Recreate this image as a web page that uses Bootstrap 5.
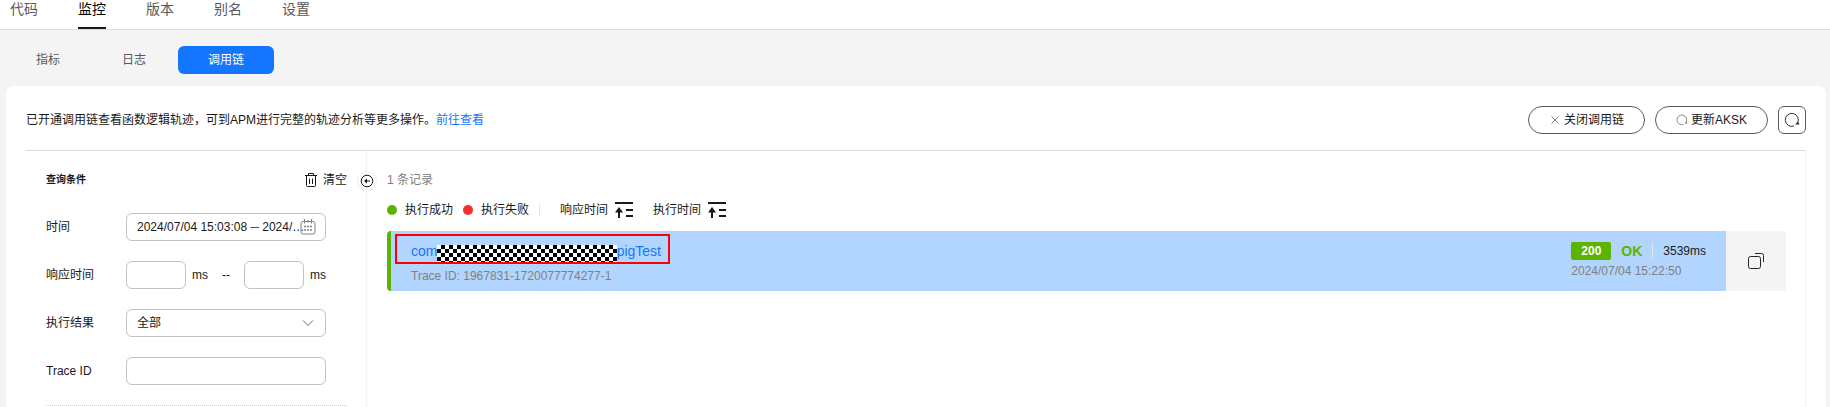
<!DOCTYPE html>
<html lang="zh-CN">
<head>
<meta charset="utf-8">
<meta name="viewport" content="width=device-width, initial-scale=1">
<title>函数监控 - 调用链</title>
<link href="https://cdn.jsdelivr.net/npm/bootstrap@5.3.0/dist/css/bootstrap.min.css" rel="stylesheet">
<style>
  body { background: #f4f4f4; color: #191919; font: 12px/18px "Liberation Sans", "Noto Sans CJK SC", sans-serif; overflow-x: hidden; }
  svg { display: block; flex: none; }
  .main-tabs { height: 30px; padding-left: 10px; gap: 40px; border-bottom: 1px solid #dbdbdb; }
  .main-tabs a { color: #595959; font-size: 14px; line-height: 18px; height: 29px; text-decoration: none; }
  .main-tabs a.active { color: #000; border-bottom: 2px solid #191919; }
  .sub-tabs { padding: 16px 6px 12px; gap: 2px; }
  .sub-tabs .btn { font-size: 12px; line-height: 18px; padding: 5px 30px; color: #595959; border-radius: 6px; }
  .sub-tabs .btn.active { background: #1476ff; color: #fff; }
  .panel { background: #fff; border-radius: 8px 8px 0 0; margin: 0 4px 0 6px; padding: 20px 20px 0; min-height: calc(100vh - 86px); }
  .panel-head { padding-bottom: 16px; border-bottom: 1px solid #dcdce3; }
  .head-actions { gap: 10px; }
  .blue-link { color: #1476ff; text-decoration: none; }
  .tool-btn { height: 28px; border: 1px solid #595959; font-size: 12px; line-height: 18px; padding: 0 20px; gap: 3px; background: #fff; color: #191919; border-radius: 14px; }
  .tool-btn.square { width: 28px; padding: 0; border-radius: 6px; }
  .filters { width: 341px; flex: none; border-right: 1px solid #f2f2f2; padding: 19px 19px 0 20px; }
  .filters-head { margin-bottom: 23px; }
  .filters h2 { font-size: 10px; line-height: 20px; font-weight: 700; margin: 0; }
  .clear-btn { border: 0; background: none; padding: 0; gap: 6px; color: #191919; }
  .filter-row { height: 28px; margin-bottom: 20px; }
  .filter-row > label { width: 80px; flex: none; }
  .field { height: 28px; border: 1px solid #c2c2c2; border-radius: 6px; font-size: 12px; line-height: 18px; padding: 0 10px; color: #191919; background-color: #fff; }
  .field-wide { width: 200px; }
  .field-small { width: 60px; }
  select.field { appearance: none; }
  .field-icon { position: absolute; right: 10px; top: 6px; pointer-events: none; }
  .date-text { padding-right: 16px; text-overflow: ellipsis; }
  .unit { margin-left: 6px; }
  .dash { margin: 0 14px; }
  .collapse-btn { position: absolute; left: 331px; top: 20px; width: 20px; height: 20px; padding: 0; border: 1px solid #f0f0f0; border-radius: 50%; background: #fff; }
  .results { padding: 19px 19px 0 20px; border-right: 1px solid #f2f2f2; min-width: 0; }
  .muted { color: #808080; }
  .count { line-height: 20px; }
  .legend-bar { height: 20px; margin: 10px 0 11px; gap: 10px; }
  .legend-bar > span { display: flex; align-items: center; gap: 8px; }
  .dot { width: 10px; height: 10px; border-radius: 50%; flex: none; }
  .bg-ok { background: #5cb300; }
  .bg-fail { background: #f23030; }
  .rule { width: 1px; height: 14px; background: #e6e6e6; }
  .sort-btn { border: 0; background: none; padding: 0; margin-right: 10px; gap: 7px; color: #191919; }
  .rule + .sort-btn { margin-left: 10px; }
  .trace { height: 60px; }
  .trace-body { background: #b2d5ff; border-left: 4px solid #5cb300; border-radius: 4px 0 0 4px; padding: 0 20px 0 4px; }
  .fn-name { border: 2px solid #f00; height: 30px; width: 275px; padding: 0 7px 0 14px; font-size: 14px; line-height: 22px; margin-top: 3px; }
  .redacted { height: 17px; background: repeating-conic-gradient(#000 0 25%, #fff 0 50%) 0 0 / 8px 8px; }
  .trace-id { padding-left: 16px; margin-top: 3px; }
  .trace-status { padding-top: 11px; }
  .code-tag { width: 40px; height: 18px; border-radius: 2px; color: #fff; font-weight: 700; text-align: center; }
  .ok-text { color: #5cb300; font-size: 14px; font-weight: 700; margin: 0 10px; }
  .duration { margin-left: 10px; }
  .stamp { margin-top: 2px; }
  .copy-btn { width: 60px; flex: none; border: 0; background: #f4f4f4; padding: 0; }
  .dotted { border-top: 1px dotted #d0d0d0; }
</style>
</head>
<body>
<nav class="main-tabs d-flex bg-white">
  <a href="#">代码</a><a href="#" class="active" aria-current="page">监控</a><a href="#">版本</a><a href="#">别名</a><a href="#">设置</a>
</nav>
<div class="sub-tabs d-flex">
  <button type="button" class="btn border-0">指标</button>
  <button type="button" class="btn border-0">日志</button>
  <button type="button" class="btn border-0 active">调用链</button>
</div>
<main class="panel d-flex flex-column">
  <div class="panel-head d-flex align-items-center">
    <div class="me-auto">已开通调用链查看函数逻辑轨迹，可到APM进行完整的轨迹分析等更多操作。<a class="blue-link" href="#">前往查看</a></div>
    <div class="head-actions d-flex">
      <button type="button" class="tool-btn d-flex align-items-center justify-content-center">
        <svg width="12" height="12" viewBox="0 0 12 12" stroke="#808080"><path d="M2.500 2.500l7 7M9.500 2.500l-7 7"/></svg>关闭调用链</button>
      <button type="button" class="tool-btn d-flex align-items-center justify-content-center">
        <svg width="12" height="12" viewBox="0 0 16 16" fill="none" stroke="#808080" stroke-width="1.200"><path d="M10 14A6.500 6.500 0 1 1 13.500 11"/><path d="M11 12.500h4.500l-1.500-3z" fill="#808080" stroke="none"/></svg>更新AKSK</button>
      <button type="button" class="tool-btn square d-flex align-items-center justify-content-center" aria-label="刷新">
        <svg width="16" height="16" viewBox="0 0 16 16" fill="none" stroke="#333"><path d="M10 14A6.500 6.500 0 1 1 13.500 11"/><path d="M11 12.500h4.500l-1.500-3z" fill="#333" stroke="none"/></svg></button>
    </div>
  </div>
  <div class="d-flex flex-grow-1 position-relative">
    <section class="filters">
      <div class="filters-head d-flex justify-content-between align-items-center">
        <h2>查询条件</h2>
        <button type="button" class="clear-btn d-flex align-items-center">
          <svg width="12" height="14" viewBox="0 0 12 14" fill="none" stroke="#191919"><path d="M0 2.500h12M3.500 2.500v-2h5v2M1.500 3v9.500q0 1 1 1h7q1 0 1-1V3M4.500 5.500V11M7.500 5.500V11"/></svg>清空</button>
      </div>
      <div class="filter-row d-flex align-items-center">
        <label for="time">时间</label>
        <div class="position-relative">
          <input id="time" class="field field-wide date-text" value="2024/07/04 15:03:08 ─ 2024/07/04 15:33:08" readonly>
          <svg class="field-icon" width="16" height="16" viewBox="0 0 16 16" fill="none" stroke="#808080"><rect x="1" y="2.500" width="14" height="12.500" rx="2"/><path d="M4.500 0v4.500M8 1v3M11.500 0v4.500"/><path d="M4 7.500h9M4 11h9" stroke-width="1.500" stroke-dasharray="2 1"/></svg>
        </div>
      </div>
      <div class="filter-row d-flex align-items-center">
        <label for="rt-min">响应时间</label>
        <input id="rt-min" class="field field-small"><span class="unit">ms</span><span class="dash">--</span>
        <input class="field field-small" aria-label="最大响应时间"><span class="unit">ms</span>
      </div>
      <div class="filter-row d-flex align-items-center">
        <label for="result">执行结果</label>
        <div class="position-relative">
          <select id="result" class="field field-wide"><option>全部</option></select>
          <svg class="field-icon" width="16" height="16" viewBox="0 0 16 16" fill="none" stroke="#666"><path d="M3 5.500l5 5 5-5"/></svg>
        </div>
      </div>
      <div class="filter-row d-flex align-items-center">
        <label for="tid">Trace ID</label><input id="tid" class="field field-wide">
      </div>
      <div class="dotted"></div>
    </section>
    <button type="button" class="collapse-btn d-flex align-items-center justify-content-center" aria-label="收起">
      <svg width="14" height="14" viewBox="0 0 14 14" fill="none" stroke="#191919"><circle cx="7" cy="7" r="5.800"/><path d="M10 7H5"/><path d="M7 4.500v5L4 7z" fill="#191919" stroke="none"/></svg></button>
    <section class="results flex-grow-1">
      <div class="muted count">1 条记录</div>
      <div class="legend-bar d-flex align-items-center">
        <span><i class="dot bg-ok"></i>执行成功</span>
        <span><i class="dot bg-fail"></i>执行失败</span>
        <div class="rule"></div>
        <button type="button" class="sort-btn d-flex align-items-center">响应时间
          <svg width="18" height="16" viewBox="0 0 18 16" fill="none" stroke="#191919" stroke-width="2"><path d="M0 1h18M4 16V7M11 8h7M11 14h7"/><path d="M0 10.500L4 5l4 5.500z" fill="#191919" stroke="none"/></svg></button>
        <button type="button" class="sort-btn d-flex align-items-center">执行时间
          <svg width="18" height="16" viewBox="0 0 18 16" fill="none" stroke="#191919" stroke-width="2"><path d="M0 1h18M4 16V7M11 8h7M11 14h7"/><path d="M0 10.500L4 5l4 5.500z" fill="#191919" stroke="none"/></svg></button>
      </div>
      <article class="trace d-flex">
        <div class="trace-body d-flex justify-content-between flex-grow-1">
          <div>
            <div class="fn-name d-flex align-items-end">
              <a class="blue-link" href="#">com</a><span class="redacted flex-grow-1"></span><a class="blue-link" href="#">pigTest</a>
            </div>
            <div class="trace-id muted">Trace ID: 1967831-1720077774277-1</div>
          </div>
          <div class="trace-status">
            <div class="d-flex align-items-center">
              <span class="code-tag bg-ok">200</span><span class="ok-text">OK</span><span class="rule"></span><span class="duration">3539ms</span>
            </div>
            <div class="stamp muted">2024/07/04 15:22:50</div>
          </div>
        </div>
        <button type="button" class="copy-btn d-flex align-items-center justify-content-center" aria-label="复制">
          <svg width="16" height="16" viewBox="0 0 16 16" fill="none" stroke="#262626"><rect x=".5" y="3.500" width="12" height="12" rx="2"/><path d="M7 .5h6.500q2 0 2 2V9"/></svg></button>
      </article>
    </section>
  </div>
</main>
<script src="https://cdn.jsdelivr.net/npm/bootstrap@5.3.0/dist/js/bootstrap.bundle.min.js"></script>
</body>
</html>
